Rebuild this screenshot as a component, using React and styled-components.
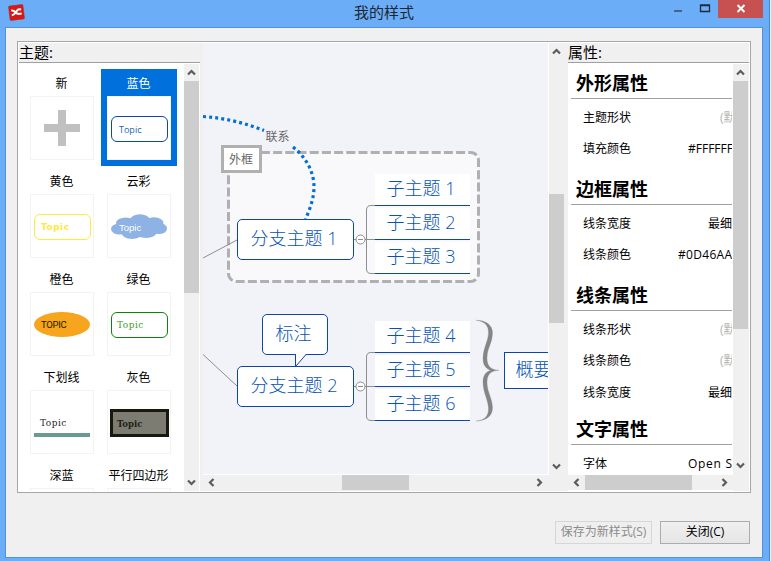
import React from "react";
import styled, { createGlobalStyle, css } from "styled-components";

const CJK = '"Noto Sans CJK SC", sans-serif';
const BLUE = "#0d46aa";

const Global = createGlobalStyle`
  * { box-sizing: border-box; }
  body { margin: 0; overflow: hidden; background: #e9eef5; font-family: "Open Sans", ${CJK}; }
  svg { display: block; }
`;

/* ---------- window frame ---------- */
const Window = styled.div`
  width: 770px;
  height: 561px;
  display: flex;
  flex-direction: column;
  background: #6badf6;
  border-right: 1px solid #4f86cb;
`;
const TitleBar = styled.header`
  height: 27px;
  flex: none;
  display: grid;
  grid-template-columns: 104px 1fr 104px;
  padding: 0 6px 0 0;
`;
const AppIcon = styled.div`
  padding: 4px 0 0 8px;
`;
const Title = styled.h1`
  margin: 0;
  font: 400 15px/25px "Open Sans", ${CJK};
  color: #1c2733;
  text-align: center;
  padding-left: 5px;
`;
const WindowButtons = styled.div`
  display: flex;
  justify-content: flex-end;
  align-items: flex-start;
`;
const WinButton = styled.div`
  width: ${(p) => p.$w}px;
  height: 18px;
  background: ${(p) => (p.$close ? "#c75050" : "transparent")};
`;
const Client = styled.main`
  flex: 1;
  margin: 0 6px 3px 5px;
  border: 1px solid #5591d8;
  background: #f0f0f0;
  padding: 13px 12px 0 11px;
  display: flex;
  flex-direction: column;
`;
const Frame = styled.div`
  width: 734px;
  height: 452px;
  border: 1px solid #a6a6ad;
  padding: 1px;
  background: #fff;
`;
const Panes = styled.div`
  width: 730px;
  height: 448px;
  display: flex;
  background: #f0f0f0;
`;

/* ---------- shared pane parts ---------- */
const Pane = styled.section`
  width: ${(p) => p.$w}px;
  margin-right: ${(p) => p.$gap || 0}px;
  height: 448px;
  display: flex;
  flex-direction: column;
`;
const PaneHeader = styled.div`
  height: 21px;
  flex: none;
  border-bottom: 1px solid #fff;
  box-shadow: inset 0 -1px 0 #a0a0a0;
  font: 400 15px/19px "Open Sans", ${CJK};
  color: #000;
  white-space: nowrap;
`;
const PaneBody = styled.div`
  height: 427px;
  display: flex;
  background: #fff;
`;
const VBar = styled.div`
  width: 15px;
  flex: none;
  display: flex;
  flex-direction: column;
  background: #f0f0f0;
  padding-bottom: ${(p) => p.$end || 0}px;
`;
const HBar = styled.div`
  height: 15px;
  flex: none;
  display: flex;
  background: #f0f0f0;
  padding-right: ${(p) => p.$end || 0}px;
`;
const ArrowCell = styled.div`
  width: ${(p) => p.$w || 15}px;
  height: ${(p) => p.$h || 15}px;
  flex: none;
  display: grid;
  place-items: center;
`;
const Track = styled.div`
  flex: 1;
  display: flex;
  flex-direction: ${(p) => (p.$row ? "row" : "column")};
`;
const Thumb = styled.div`
  background: #cdcdcd;
  ${(p) =>
    p.$row
      ? css`width: ${p.$size}px; height: 15px; margin-left: ${p.$offset}px;`
      : css`height: ${p.$size}px; width: 15px; margin-top: ${p.$offset}px;`}
`;

const CHEVRONS = {
  up: "M1 6.5 L4.5 3 L8 6.5",
  down: "M1 2.5 L4.5 6 L8 2.5",
  left: "M6.5 1 L3 4.5 L6.5 8",
  right: "M2.5 1 L6 4.5 L2.5 8",
};
const Chevron = ({ dir }) => (
  <svg width="9" height="9" viewBox="0 0 9 9">
    <path d={CHEVRONS[dir]} fill="none" stroke="#5c5c5c" strokeWidth="2.2" />
  </svg>
);
const VScroll = ({ offset, size, end }) => (
  <VBar $end={end}>
    <ArrowCell $h={17}><Chevron dir="up" /></ArrowCell>
    <Track><Thumb $offset={offset} $size={size} /></Track>
    <ArrowCell $h={17}><Chevron dir="down" /></ArrowCell>
  </VBar>
);
const HScroll = ({ offset, size, end }) => (
  <HBar $end={end}>
    <ArrowCell $w={17}><Chevron dir="left" /></ArrowCell>
    <Track $row><Thumb $row $offset={offset} $size={size} /></Track>
    <ArrowCell $w={17}><Chevron dir="right" /></ArrowCell>
  </HBar>
);

/* ---------- theme list ---------- */
const ThemeGrid = styled.div`
  width: 165px;
  height: 427px;
  overflow: hidden;
  padding: 5px 0 0 5px;
  display: grid;
  grid-template-columns: 76px 76px;
  grid-auto-rows: 97px;
  gap: 1px;
`;
const ThemeItem = styled.div`
  display: flex;
  flex-direction: column;
  align-items: center;
  background: ${(p) => (p.$selected ? "#0070dc" : "transparent")};
  color: ${(p) => (p.$selected ? "#fff" : "#000")};
`;
const ThemeLabel = styled.div`
  height: 27px;
  flex: none;
  font: 400 12px/28px ${CJK};
  white-space: nowrap;
  padding-right: 1px;
`;
const Preview = styled.div`
  width: 64px;
  height: 64px;
  flex: none;
  border: 1px solid #f3f3f3;
  background: #fff;
  display: flex;
  align-items: flex-start;
  padding: ${(p) => (p.$icon ? "13px" : "19px 0 0 3px")};
`;
const Topic = styled.div`
  width: 57px;
  height: 26px;
  flex: none;
  display: flex;
  align-items: center;
  ${(p) => p.$look}
`;
const CloudBox = styled.div`
  display: grid;
  & > * { grid-area: 1 / 1; }
`;

const looks = {
  blue: css`border: 1px solid ${BLUE}; border-radius: 6px; color: #1a66b5; font: 400 9px "Open Sans"; padding-left: 7px;`,
  yellow: css`border: 1px solid #ffe93f; border-radius: 6px; color: #ffe93f; font: 700 9px "DejaVu Sans"; letter-spacing: 0.5px; padding-left: 6px;`,
  cloud: css`color: #fff; font: 400 9.5px "Liberation Sans"; padding-left: 8px;`,
  orange: css`width: 56px; height: 25px; border-radius: 50%; background: #f6a51c; color: #1f1600; font: 400 9.5px Roboto; letter-spacing: -0.3px; padding-left: 7px;`,
  green: css`border: 1px solid #0e820e; border-radius: 6px; color: #459a1c; font: 400 9px "DejaVu Serif"; letter-spacing: 0.5px; padding-left: 5px;`,
  underline: css`width: 56px; height: 27px; border-bottom: 4px solid #6a9a94; color: #222; font: 400 9px "DejaVu Serif"; letter-spacing: 0.5px; padding: 2px 0 0 6px;`,
  gray: css`width: 59px; height: 28px; border: 3px solid #18180e; background: #7c7c72; color: #222015; font: 700 8.5px "DejaVu Serif"; padding: 1px 0 0 4px; margin: -1px 0 0 -1px;`,
};

const Plus = () => (
  <svg width="36" height="36" viewBox="0 0 36 36">
    <path d="M14 0h8v14h14v8H22v14h-8V22H0v-8h14z" fill="#c0c0c0" />
  </svg>
);
const Cloud = () => (
  <svg width="57" height="26" viewBox="0 0 57 26" fill="#8eb2e3">
    <ellipse cx="8.500" cy="15" rx="8.500" ry="5.500" />
    <ellipse cx="15" cy="9" rx="10" ry="5.500" />
    <ellipse cx="29" cy="6.500" rx="10" ry="6.200" />
    <ellipse cx="43" cy="9" rx="9.500" ry="5.800" />
    <ellipse cx="48" cy="14.500" rx="8" ry="5.500" />
    <ellipse cx="35" cy="18" rx="11" ry="6" />
    <ellipse cx="21" cy="19" rx="10.500" ry="6" />
    <rect x="10" y="7" width="36" height="12" />
  </svg>
);

const themes = [
  { label: "新", kind: "plus" },
  { label: "蓝色", kind: "blue", selected: true },
  { label: "黄色", kind: "yellow" },
  { label: "云彩", kind: "cloud" },
  { label: "橙色", kind: "orange", text: "TOPIC" },
  { label: "绿色", kind: "green" },
  { label: "下划线", kind: "underline" },
  { label: "灰色", kind: "gray" },
  { label: "深蓝" },
  { label: "平行四边形" },
];

function PreviewContent({ kind, text = "Topic" }) {
  if (!kind) return null;
  if (kind === "plus") return <Plus />;
  const topic = <Topic $look={looks[kind]}>{text}</Topic>;
  return kind === "cloud" ? <CloudBox><Cloud />{topic}</CloudBox> : topic;
}

/* ---------- mind map canvas ---------- */
const CanvasRow = styled.div`
  height: 432px;
  display: flex;
`;
const MapCanvas = styled.div`
  position: relative;
  width: 346px;
  height: 432px;
  overflow: hidden;
  background: #f2f3f9;
  border-right: 1px solid #fff;
  border-bottom: 1px solid #fff;
`;
const Node = styled.div`
  position: absolute;
  left: ${(p) => p.$x}px;
  top: ${(p) => p.$y}px;
  width: ${(p) => p.$w}px;
  height: ${(p) => p.$h}px;
  display: flex;
  align-items: center;
  justify-content: center;
  white-space: nowrap;
  font: 300 18px/20px "Open Sans", ${CJK};
  color: #0553b4;
  background: #fff;
  padding: 0 3px 3px 0;
`;
const BranchNode = styled(Node)`
  border: 1px solid ${BLUE};
  border-radius: ${(p) => p.$radius ?? 5}px;
`;
const SubNode = styled(Node)`
  border-bottom: 1px solid ${BLUE};
`;
const BoundaryLabel = styled(Node)`
  border: 3px solid #b0b0b0;
  font: 400 12px/14px ${CJK};
  color: #666;
  padding: 0 1px 1px 0;
`;
const RelationLabel = styled(Node)`
  background: transparent;
  font: 400 12px/14px ${CJK};
  color: #666;
  padding: 0 0 1px;
`;
const Layer = styled.svg`
  position: absolute;
  left: 0;
  top: 0;
`;

const subTopics = [
  ["子主题 1", 131], ["子主题 2", 165], ["子主题 3", 199],
  ["子主题 4", 278], ["子主题 5", 312], ["子主题 6", 346],
];

const MindMap = () => (
  <MapCanvas>
    <Layer width="345" height="431" viewBox="203 43 345 431" fill="none">
      <rect x="228.500" y="152.500" width="250" height="129" rx="8" fill="#f9f9fb" stroke="#b0b0b0" strokeWidth="3" strokeDasharray="9 3.200" />
      <g stroke="#8e8e8e">
        <path d="M203 258 L237 240 M203 354.500 L237 386" />
        <path d="M354 239.500h21 M375 205.500h-4q-4.500 0-4.500 4.500v59q0 4.500 4.500 4.500h4" />
        <path d="M354 386.500h21 M375 352.500h-4q-4.500 0-4.500 4.500v59q0 4.500 4.500 4.500h4" />
        <circle cx="360.500" cy="239.500" r="4.500" fill="#fff" />
        <circle cx="360.500" cy="386.500" r="4.500" fill="#fff" />
        <path d="M358 239.500h5 M358 386.500h5" />
      </g>
      <g stroke="#006fd6" strokeWidth="3.200" strokeDasharray="3 3.100">
        <path d="M203 116.500 C225 118 245 123 264 130.500" />
        <path d="M293 147 C306 157 314 172 314 187 C314 198 310 209 305.500 219" />
      </g>
      <path
        d="M476 320.300 C486 320.300 492.500 325 492.500 333 C492.500 343 487 348 487 358 C487 365.500 490 369.800 499 370.300 C490 370.800 487 375 487 382.500 C487 392.500 492.500 398 492.500 408 C492.500 416 486 421 476 421 C484 420.500 488.500 416.500 488.500 409 C488.500 400 483 393 483 382 C483 375.500 486 371.500 491 370.300 C486 369 483 365 483 358.500 C483 348 488.500 341 488.500 332.500 C488.500 325 484 321 476 320.300Z"
        fill="#858585" stroke="#858585" strokeWidth="0.300"
      />
    </Layer>
    <BoundaryLabel $x={18} $y={102} $w={41} $h={28}>外框</BoundaryLabel>
    <RelationLabel $x={61} $y={86} $w={27} $h={15}>联系</RelationLabel>
    <BranchNode $x={34} $y={176} $w={117} $h={41}>分支主题 1</BranchNode>
    <BranchNode $x={34} $y={323} $w={117} $h={41}>分支主题 2</BranchNode>
    <BranchNode $x={59} $y={271} $w={66} $h={41}>标注</BranchNode>
    <BranchNode $x={301} $y={309} $w={62} $h={37} $radius={0}>概要</BranchNode>
    {subTopics.map(([text, y]) => (
      <SubNode key={text} $x={172} $y={y} $w={95} $h={32}>{text}</SubNode>
    ))}
    <Layer width="345" height="431" viewBox="203 43 345 431">
      <path d="M295.500 354 V366 L306 354Z" fill="#fff" />
      <path d="M295.500 354 V366.500 L306 354.500" fill="none" stroke={BLUE} />
    </Layer>
  </MapCanvas>
);

/* ---------- properties ---------- */
const PropertyList = styled.div`
  width: 165px;
  height: 411px;
  overflow: hidden;
  padding-right: 1px;
`;
const Group = styled.div`
  height: ${(p) => p.$h}px;
`;
const GroupTitle = styled.h2`
  margin: 0 0 4px 3px;
  height: 35px;
  border-bottom: 1px solid #a0a0a0;
  padding-left: 5px;
  font: 700 18px/36px ${CJK};
  color: #000;
`;
const Property = styled.div`
  display: flex;
  justify-content: space-between;
  height: 31.300px;
  padding-left: 15px;
  font: 400 12px/30px "Open Sans", ${CJK};
  color: #000;
  white-space: nowrap;
`;
const Value = styled.span`
  width: ${(p) => p.$w}px;
  overflow: hidden;
  letter-spacing: ${(p) => p.$spacing || 0}px;
  color: ${(p) => (p.$muted ? "#b4b4b4" : "#000")};
`;
const PropBody = styled.div`
  display: flex;
  height: 427px;
  background: #f0f0f0;
`;
const PropColumn = styled.div`
  width: 165px;
  background: #fff;
`;

const groups = [
  {
    title: "外形属性",
    h: 106,
    rows: [
      { name: "主题形状", value: "(默认)", w: 12, muted: true },
      { name: "填充颜色", value: "#FFFFFF", w: 44 },
    ],
  },
  {
    title: "边框属性",
    h: 106,
    rows: [
      { name: "线条宽度", value: "最细", w: 24 },
      { name: "线条颜色", value: "#0D46AA", w: 54, spacing: 0.3 },
    ],
  },
  {
    title: "线条属性",
    h: 134,
    rows: [
      { name: "线条形状", value: "(默认)", w: 12, muted: true },
      { name: "线条颜色", value: "(默认)", w: 12, muted: true },
      { name: "线条宽度", value: "最细", w: 24 },
    ],
  },
  {
    title: "文字属性",
    h: 106,
    rows: [{ name: "字体", value: "Open Sans", w: 44, spacing: 0.7 }],
  },
];

/* ---------- footer ---------- */
const Footer = styled.footer`
  height: 51px;
  width: 733px;
  display: flex;
  justify-content: flex-end;
  align-items: flex-end;
  gap: 8px;
`;
const Button = styled.button`
  width: ${(p) => p.$w}px;
  height: 23px;
  padding: 0 0 2px;
  border: 1px solid ${(p) => (p.disabled ? "#d6d6d6" : "#acacac")};
  background: ${(p) => (p.disabled ? "#efefef" : "linear-gradient(#f0f0f0, #e5e5e5)")};
  color: ${(p) => (p.disabled ? "#8c8c8c" : "#000")};
  font: 400 12px/19px "Open Sans", ${CJK};
  white-space: nowrap;
`;

export default function App() {
  return (
    <>
      <Global />
      <Window>
        <TitleBar>
          <AppIcon>
            <svg width="17" height="17" viewBox="0 0 17 17">
              <g transform="rotate(-7 8.500 8.500)">
                <rect x="1.300" y="1.300" width="14.400" height="14.400" rx="1" fill="#db1713" stroke="#a93239" strokeWidth=".6" />
                <path d="M3.500 6q2.400 0 3.600 1.800t3.400 2.400h3 M3.500 10.700q2.400 0 3.800-2t3.200-2.900h3" fill="none" stroke="#fff" strokeWidth="2" />
              </g>
            </svg>
          </AppIcon>
          <Title>我的样式</Title>
          <WindowButtons>
            <WinButton $w={27}><svg width="27" height="18"><path d="M10 10h8v2h-8z" fill="#44658f" /></svg></WinButton>
            <WinButton $w={27}><svg width="27" height="18"><path d="M9.500 5.500h9v6h-9z M9 5h10" fill="none" stroke="#1f2b3a" strokeWidth="1.300" /></svg></WinButton>
            <WinButton $w={45} $close><svg width="45" height="18"><path d="M19.500 5l7 7m0-7l-7 7" fill="none" stroke="#fff" strokeWidth="2" /></svg></WinButton>
          </WindowButtons>
        </TitleBar>
        <Client>
          <Frame>
            <Panes>
              <Pane $w={181} $gap={3}>
                <PaneHeader>主题:</PaneHeader>
                <PaneBody>
                  <ThemeGrid>
                    {themes.map((t) => (
                      <ThemeItem key={t.label} $selected={t.selected}>
                        <ThemeLabel>{t.label}</ThemeLabel>
                        <Preview $icon={t.kind === "plus"}>
                          <PreviewContent kind={t.kind} text={t.text} />
                        </Preview>
                      </ThemeItem>
                    ))}
                  </ThemeGrid>
                  <VScroll offset={0} size={212} />
                </PaneBody>
              </Pane>
              <Pane $w={361} $gap={4}>
                <CanvasRow>
                  <MindMap />
                  <VScroll offset={134} size={129} />
                </CanvasRow>
                <HScroll offset={122} size={67} end={16} />
              </Pane>
              <Pane $w={181}>
                <PaneHeader>属性:</PaneHeader>
                <PropBody>
                  <PropColumn>
                    <PropertyList>
                      {groups.map((g) => (
                        <Group key={g.title} $h={g.h}>
                          <GroupTitle>{g.title}</GroupTitle>
                          {g.rows.map((r) => (
                            <Property key={r.name}>
                              <span>{r.name}</span>
                              <Value $w={r.w} $muted={r.muted} $spacing={r.spacing}>{r.value}</Value>
                            </Property>
                          ))}
                        </Group>
                      ))}
                    </PropertyList>
                    <HScroll offset={0} size={107} />
                  </PropColumn>
                  <VScroll offset={0} size={248} end={17} />
                </PropBody>
              </Pane>
            </Panes>
          </Frame>
          <Footer>
            <Button $w={97} disabled>保存为新样式(S)</Button>
            <Button $w={90}>关闭(C)</Button>
          </Footer>
        </Client>
      </Window>
    </>
  );
}
